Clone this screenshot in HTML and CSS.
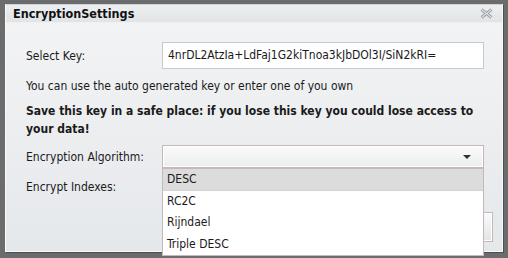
FILE: index.html
```html
<!DOCTYPE html>
<html lang="en">
<head>
  <meta charset="UTF-8">
  <title>EncryptionSettings</title>
  <link rel="stylesheet" href="styles.css">
</head>
<body>
  <div class="window">
    <div class="title-bar">
      <span class="title">EncryptionSettings</span>
      <span class="close">
        <svg width="13" height="11" viewBox="0 0 13 11">
          <path d="M1.5 1.5 L11.5 9.5 M11.5 1.5 L1.5 9.5" stroke="#a0a4a8" stroke-width="3" fill="none"/>
          <path d="M1.5 1.5 L11.5 9.5 M11.5 1.5 L1.5 9.5" stroke="#f4f5f6" stroke-width="1" fill="none"/>
        </svg>
      </span>
    </div>
    <div class="content">
      <div class="row row-key">
        <label>Select Key:</label>
        <div class="textbox">4nrDL2AtzIa+LdFaj1G2kiTnoa3kJbDOl3I/SiN2kRI=</div>
      </div>
      <p class="hint">You can use the auto generated key or enter one of you own</p>
      <p class="warning">Save this key in a safe place: if you lose this key you could lose access to your data!</p>
      <div class="row row-algo">
        <label>Encryption Algorithm:</label>
        <div class="select">
          <span class="arrow"></span>
          <ul class="options">
            <li class="selected">DESC</li>
            <li>RC2C</li>
            <li>Rijndael</li>
            <li>Triple DESC</li>
          </ul>
        </div>
      </div>
      <div class="row row-index">
        <label>Encrypt Indexes:</label>
      </div>
      <div class="buttons">
        <span class="button"></span>
      </div>
    </div>
  </div>
</body>
</html>
```

FILE: styles.css
```css
* { margin: 0; padding: 0; box-sizing: border-box; }
html, body { height: 100%; overflow: hidden; }
body {
  background: #6c6c6c;
  font-family: "DejaVu Sans Condensed", "DejaVu Sans", sans-serif;
  font-size: 12px;
  color: #1a1a1a;
  padding: 4px 5px 0 5px;
}
.window {
  width: 498px;
  height: 248px;
  background: linear-gradient(#f3f4f5, #e5e8eb);
  border: 1px solid #fafafa;
  border-top-color: #cdd3d8;
  box-shadow: 1px 1px 0 #4e4e4e;
}
.title-bar {
  height: 18px;
  display: flex;
  align-items: center;
  justify-content: space-between;
  padding: 0 9px 0 7px;
  background: linear-gradient(#edf0f2, #e1e4e7);
  border-bottom: 1px solid #eef0f2;
}
.title {
  font-weight: bold;
  font-size: 12.5px;
  color: #111;
}
.close { display: flex; }
.content { padding: 0 0 0 20px; }
.row {
  display: flex;
  align-items: center;
}
.row label { width: 136px; }
.row-key { margin-top: 19px; }
.textbox {
  width: 322px;
  height: 27px;
  background: #fff;
  border: 1px solid #c9c9c9;
  padding: 0 5px;
  line-height: 25px;
}
.hint { margin-top: 10px; line-height: 15px; }
.warning {
  margin-top: 8px;
  font-weight: bold;
  line-height: 18px;
  padding-right: 20px;
}
.row-algo { margin-top: 7px; }
.select {
  position: relative;
  width: 322px;
  height: 23px;
  border: 1px solid #c4b8bc;
  background: linear-gradient(#fbfbfb, #ecedee);
  box-shadow: inset 0 0 0 1px #fff;
}
.arrow {
  position: absolute;
  right: 12px;
  top: 9px;
  border-left: 4px solid transparent;
  border-right: 4px solid transparent;
  border-top: 4px solid #333;
}
.options {
  position: absolute;
  left: -1px;
  top: 22px;
  width: 322px;
  list-style: none;
  background: #fff;
  border: 1px solid #c4b8bc;
  z-index: 2;
}
.options li {
  height: 21.5px;
  line-height: 21px;
  padding-left: 4px;
  font-size: 12px;
}
.options li.selected {
  background: #dcdcdc;
  border-bottom: 1px solid #d2d2d2;
}
.row-index { margin-top: 12px; }
.buttons {
  display: flex;
  justify-content: flex-end;
  padding-right: 9px;
  margin-top: 18px;
}
.button {
  width: 60px;
  height: 30px;
  border: 1px solid #c4b8bc;
  background: linear-gradient(#fafafa, #e4e4e4);
  box-shadow: inset 0 0 0 1px #fff;
}
```
